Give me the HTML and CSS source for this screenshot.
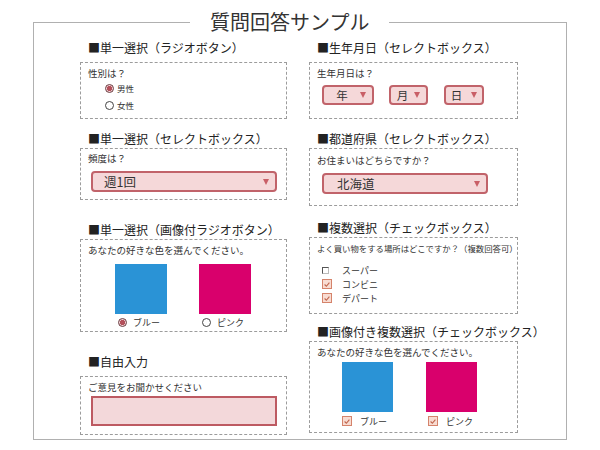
FILE: index.html
```html
<!DOCTYPE html>
<html lang="ja">
<head>
<meta charset="utf-8">
<title>質問回答サンプル</title>
<link rel="stylesheet" href="styles.css">
</head>
<body>
<fieldset class="survey">
  <legend class="survey-title">質問回答サンプル</legend>
  <div class="columns">
    <div class="col">
      <section class="item item--top">
        <h2 class="item-head">■単一選択（ラジオボタン）</h2>
        <div class="box box--gender">
          <p class="q">性別は？</p>
          <ul class="radio-list">
            <li class="opt"><span class="radio radio--on"></span>男性</li>
            <li class="opt"><span class="radio"></span>女性</li>
          </ul>
        </div>
      </section>
      <section class="item item--sp12">
        <h2 class="item-head">■単一選択（セレクトボックス）</h2>
        <div class="box box--freq">
          <p class="q">頻度は？</p>
          <div class="select select--freq"><span>週1回</span><span class="arrow"></span></div>
        </div>
      </section>
      <section class="item item--sp22">
        <h2 class="item-head">■単一選択（画像付ラジオボタン）</h2>
        <div class="box box--swatch-radio">
          <p class="q">あなたの好きな色を選んでください。</p>
          <div class="swatches swatches--radio">
            <div class="swatch-opt">
              <div class="swatch swatch--blue"></div>
              <div class="swatch-label swatch-label--radio"><span class="radio radio--on"></span>ブルー</div>
            </div>
            <div class="swatch-opt">
              <div class="swatch swatch--pink"></div>
              <div class="swatch-label swatch-label--radio"><span class="radio"></span>ピンク</div>
            </div>
          </div>
        </div>
      </section>
      <section class="item item--sp22 item--free">
        <h2 class="item-head">■自由入力</h2>
        <div class="box box--free">
          <p class="q">ご意見をお聞かせください</p>
          <textarea class="textarea"></textarea>
        </div>
      </section>
    </div>

    <div class="col">
      <section class="item item--top">
        <h2 class="item-head">■生年月日（セレクトボックス）</h2>
        <div class="box box--birth">
          <p class="q">生年月日は？</p>
          <div class="dates">
            <div class="select select--date select--year"><span>年</span><span class="arrow"></span></div>
            <div class="select select--date select--month"><span>月</span><span class="arrow"></span></div>
            <div class="select select--date select--day"><span>日</span><span class="arrow"></span></div>
          </div>
        </div>
      </section>
      <section class="item item--sp12">
        <h2 class="item-head">■都道府県（セレクトボックス）</h2>
        <div class="box box--pref">
          <p class="q">お住まいはどちらですか？</p>
          <div class="select select--pref"><span>北海道</span><span class="arrow"></span></div>
        </div>
      </section>
      <section class="item item--sp14">
        <h2 class="item-head">■複数選択（チェックボックス）</h2>
        <div class="box box--checks">
          <p class="q q--long">よく買い物をする場所はどこですか？（複数回答可）</p>
          <ul class="check-list">
            <li class="check-row"><span class="check-slot"><span class="check check--off"></span></span>スーパー</li>
            <li class="check-row"><span class="check-slot"><span class="check"><svg viewBox="0 0 10 10" width="9" height="9"><polyline points="2,5 4.2,7.2 8,2.6" fill="none" stroke="#c0644c" stroke-width="1.4"/></svg></span></span>コンビニ</li>
            <li class="check-row"><span class="check-slot"><span class="check"><svg viewBox="0 0 10 10" width="9" height="9"><polyline points="2,5 4.2,7.2 8,2.6" fill="none" stroke="#c0644c" stroke-width="1.4"/></svg></span></span>デパート</li>
          </ul>
        </div>
      </section>
      <section class="item item--sp10">
        <h2 class="item-head">■画像付き複数選択（チェックボックス）</h2>
        <div class="box box--swatch-check">
          <p class="q">あなたの好きな色を選んでください。</p>
          <div class="swatches swatches--check">
            <div class="swatch-opt">
              <div class="swatch swatch--blue swatch--sm"></div>
              <div class="swatch-label swatch-label--check"><span class="check"><svg viewBox="0 0 10 10" width="9" height="9"><polyline points="2,5 4.2,7.2 8,2.6" fill="none" stroke="#c0644c" stroke-width="1.4"/></svg></span>ブルー</div>
            </div>
            <div class="swatch-opt">
              <div class="swatch swatch--pink swatch--sm"></div>
              <div class="swatch-label swatch-label--check swatch-label--shift"><span class="check"><svg viewBox="0 0 10 10" width="9" height="9"><polyline points="2,5 4.2,7.2 8,2.6" fill="none" stroke="#c0644c" stroke-width="1.4"/></svg></span>ピンク</div>
            </div>
          </div>
        </div>
      </section>
    </div>
  </div>
</fieldset>
</body>
</html>
```

FILE: styles.css
```css
* { box-sizing: border-box; }

body {
  margin: 0;
  background: #fff;
  color: #333;
  font-family: "Noto Sans CJK JP", "Noto Sans", sans-serif;
}

.survey {
  margin: 8px 0 0 33px;
  width: 534px;
  min-inline-size: 0;
  padding: 0 48px 4px 46px;
  border: 1px solid #b0b0b0;
}

.survey-title {
  margin-left: 110px;
  padding: 0 20px;
  font-size: 20px;
  line-height: 28px;
  color: #333;
}

.columns {
  display: grid;
  grid-template-columns: 207px 209px;
  column-gap: 22px;
  align-items: start;
  padding-top: 4px;
}

.col {
  display: flex;
  flex-direction: column;
}

.item-head {
  margin: 0 0 1px;
  padding-left: 8px;
  font-size: 12px;
  font-weight: normal;
  line-height: 16px;
  color: #222;
  white-space: nowrap;
}

.item--top .item-head,
.item--free .item-head { margin-bottom: 6px; }

.item--sp10 { margin-top: 10px; }
.item--sp12 { margin-top: 12px; }
.item--sp14 { margin-top: 14px; }
.item--sp22 { margin-top: 22px; }

.box {
  border: 1px dashed #9c9c9c;
  padding: 4px 7px 5px;
}

.q {
  margin: 0;
  font-size: 9.5px;
  line-height: 12px;
  color: #333;
  white-space: nowrap;
}

.q--long { font-size: 8.4px; }

/* radio */
.radio-list {
  list-style: none;
  margin: 1px 0 0 17px;
  padding: 0;
  display: flex;
  flex-direction: column;
  gap: 1px;
}

.opt {
  display: flex;
  align-items: center;
  gap: 3px;
  height: 16px;
  font-size: 8.5px;
}

.radio {
  flex: none;
  width: 9px;
  height: 9px;
  border-radius: 50%;
  border: 1px solid #444;
  background: #fff;
}

.radio--on {
  border-color: #6a3b40;
  background: radial-gradient(circle, #b4505b 0 2.4px, #f3d3d6 2.9px);
}

/* select */
.box--freq { padding: 3px 7px 7px; }
.box--birth { padding: 4px 7px 13px; }
.box--pref { padding: 5px 7px 11px; }

.select {
  display: flex;
  align-items: center;
  justify-content: space-between;
  height: 21px;
  border: 2px solid #c1636a;
  border-radius: 4px;
  background: #f5d8d9;
  font-size: 12.5px;
  color: #333;
  padding: 0 6px 0 11px;
}

.select--freq { margin: 7px 0 0 3px; width: 186px; }
.select--pref { margin: 7px 0 0 5px; width: 166px; padding-left: 13px; }

.arrow {
  flex: none;
  width: 0;
  height: 0;
  border-left: 3.5px solid transparent;
  border-right: 3.5px solid transparent;
  border-top: 6px solid #c95f67;
}

.dates {
  display: flex;
  gap: 15px;
  margin: 6px 0 0 5px;
}

.select--date {
  height: 20px;
  padding: 0;
  justify-content: center;
  gap: 8px;
  font-size: 11.5px;
}

.select--year { width: 52px; gap: 12px; padding-left: 6px; }
.select--month { width: 39px; gap: 6px; }
.select--day { width: 40px; margin-left: 1px; gap: 9px; }

/* swatches */
.box--swatch-radio { padding: 4px 7px 2px; }
.box--swatch-check { padding: 4px 7px 4px; }

.swatches { display: flex; }
.swatches--radio { gap: 32px; margin-top: 8px; padding-left: 27px; }
.swatches--check { gap: 33px; margin-top: 4px; padding-left: 25px; }

.swatch-opt {
  display: flex;
  flex-direction: column;
}

.swatch { width: 52px; height: 50px; }
.swatch--sm { width: 51px; }
.swatch--blue { background: #2a93d6; }
.swatch--pink { background: #d9006c; }

.swatch-label {
  display: flex;
  align-items: center;
  height: 14px;
  font-size: 9px;
  white-space: nowrap;
}

.swatch-label--radio { gap: 6px; margin-top: 1px; padding-left: 3px; }
.swatch-label--check { gap: 8px; margin-top: 2px; }
.swatch-label--shift { padding-left: 2px; }

/* checkboxes */
.box--checks { padding: 4px 7px 8px; }

.check-list {
  list-style: none;
  margin: 9px 0 0 5px;
  padding: 0;
}

.check-row {
  display: flex;
  align-items: center;
  gap: 10px;
  height: 14px;
  font-size: 9px;
}

.check-slot {
  flex: none;
  width: 10px;
  display: flex;
  align-items: center;
}

.check {
  flex: none;
  display: flex;
  align-items: center;
  justify-content: center;
  width: 10px;
  height: 10px;
  border: 1px solid #d5836b;
  background: #f8dcd2;
}

.check--off {
  width: 7px;
  height: 7px;
  border: 1px solid #555;
  border-right-color: #bbb;
  border-bottom-color: #bbb;
  background: #fff;
}

/* free input */
.box--free { padding: 4px 7px 8px; }

.textarea {
  display: block;
  margin: 3px 0 0 3px;
  width: 186px;
  height: 30px;
  border: 2px solid #bd5a62;
  background: #f3d8da;
  resize: none;
  padding: 0;
  font: inherit;
}
```
